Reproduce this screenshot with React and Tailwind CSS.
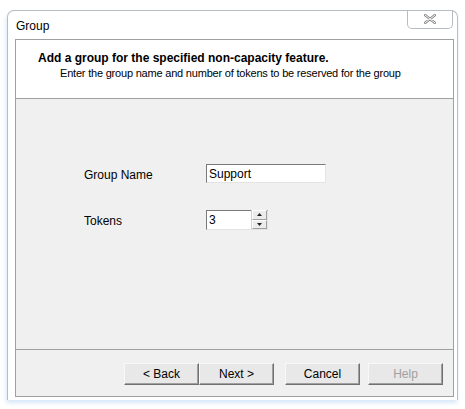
const btnCls = 'w-[75px] h-[22px] flex items-center justify-center bg-[#e8e8e8] border border-t-[#f8f8f8] border-l-[#f8f8f8] border-r-[#707070] border-b-[#707070] shadow-[inset_-1px_-1px_0_#a0a0a0] text-[12px]'

function Spinner() {
  return (
    <div className="flex flex-col w-[16px] h-[19px] border-l border-[#d0d0d0]">
      <div className="flex-1 flex items-center justify-center bg-[#ececec] border border-t-white border-l-white border-r-[#a0a0a0] border-b-[#a0a0a0]">
        <svg width="5" height="3" viewBox="0 0 5 3"><path d="M2.5 0 L5 3 L0 3 Z" fill="#222" /></svg>
      </div>
      <div className="flex-1 flex items-center justify-center bg-[#ececec] border border-t-white border-l-white border-r-[#a0a0a0] border-b-[#a0a0a0]">
        <svg width="5" height="3" viewBox="0 0 5 3"><path d="M0 0 L5 0 L2.5 3 Z" fill="#222" /></svg>
      </div>
    </div>
  )
}

export default function App() {
  return (
    <div className="w-[465px] h-[409px] bg-white overflow-hidden" style={{ fontFamily: '"Liberation Sans", Arial, sans-serif' }}>
      <div className="ml-[7px] mt-[10px] w-[451px] h-[390px] border-l border-t border-r border-[#b8bcc4] rounded-t-[7px] flex flex-col bg-white shadow-[-1px_3px_4px_#d6e8f8]">
        {/* title bar */}
        <div className="h-[28px] flex items-start justify-between pl-[8px]">
          <span className="text-[12px] text-black mt-[6px]">Group</span>
          <div className="w-[46px] h-[19px] mr-[4px] -mt-px border border-t-0 border-[#b8bcc4] rounded-b-[5px] flex items-center justify-center">
            <svg width="12" height="10" viewBox="0 0 12 10">
              <path d="M1 1 L11 9 M11 1 L1 9" stroke="#8a8a8a" strokeWidth="2.5" strokeLinecap="round" />
              <path d="M1 1 L11 9 M11 1 L1 9" stroke="#f4f4f4" strokeWidth="1" strokeLinecap="round" />
            </svg>
          </div>
        </div>

        {/* content panel */}
        <div className="ml-[7px] w-[439px] h-[358px] border border-[#a0a0a0] flex flex-col">
          <div className="h-[59px] bg-white border-b border-[#a0a0a0] pl-[22px] pt-[11px]">
            <div className="text-[12px] font-bold text-black leading-[15px]">Add a group for the specified non-capacity feature.</div>
            <div className="text-[11px] text-black leading-[15px] pl-[22px] tracking-[-0.2px]">Enter the group name and number of tokens to be reserved for the group</div>
          </div>

          <div className="flex-1 bg-[#f0f0f0] border-b border-[#a0a0a0] pl-[68px] pt-[65px] text-[12px] text-black">
            <div className="flex items-center h-[19px]">
              <span className="w-[122px] mt-[3px]">Group Name</span>
              <div className="w-[120px] h-[19px] bg-white border border-t-[#7a7a7a] border-l-[#7a7a7a] border-r-[#e3e3e3] border-b-[#e3e3e3] flex items-center pl-[2px]">Support</div>
            </div>
            <div className="flex items-center h-[19px] mt-[27px]">
              <span className="w-[122px] mt-[3px]">Tokens</span>
              <div className="w-[62px] h-[20px] bg-white border border-t-[#7a7a7a] border-l-[#7a7a7a] border-r-[#e3e3e3] border-b-[#e3e3e3] flex items-center justify-between pl-[2px]">
                <span>3</span>
                <Spinner />
              </div>
            </div>
          </div>

          <div className="h-[46px] bg-[#f0f0f0] flex items-start justify-end pr-[10px] pt-[13px]">
            <div className={btnCls}>&lt; Back</div>
            <div className={btnCls}>Next &gt;</div>
            <div className={btnCls + ' ml-[11px]'}>Cancel</div>
            <div className={btnCls + ' ml-[8px] text-[#a0a0a0]'}>Help</div>
          </div>
        </div>
      </div>
    </div>
  )
}
